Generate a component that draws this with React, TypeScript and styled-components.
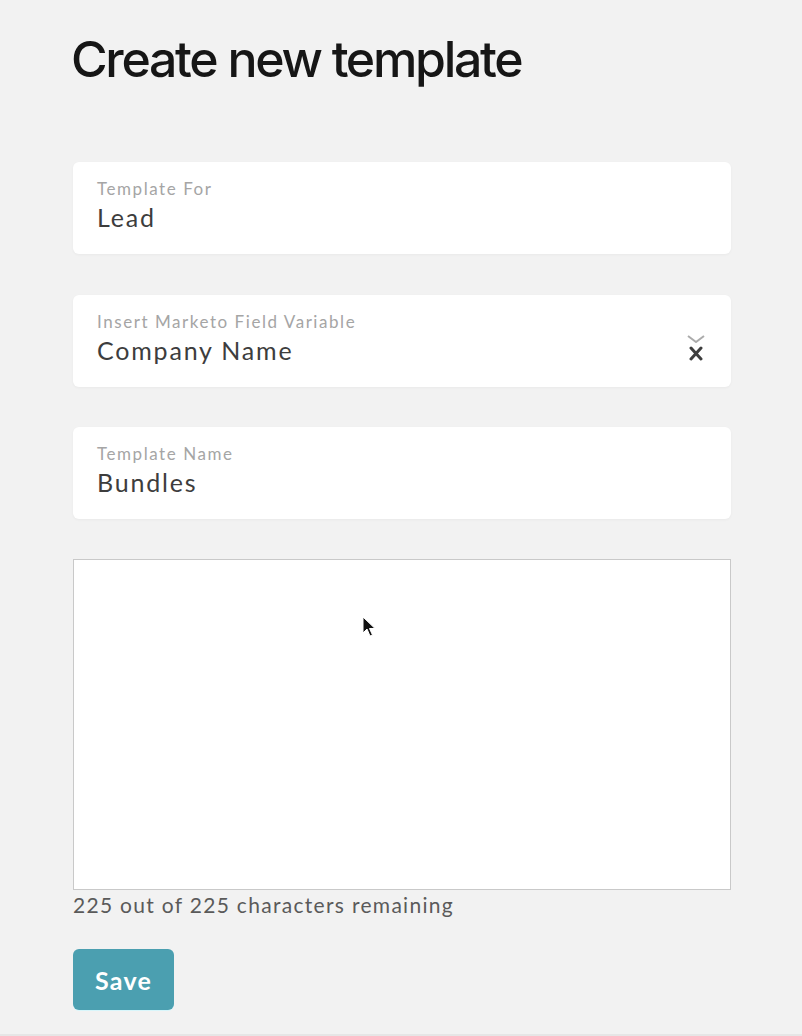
import React, { FC } from "react";
import styled, { createGlobalStyle } from "styled-components";

const GlobalStyle = createGlobalStyle`
  html, body {
    margin: 0;
    padding: 0;
    background: #f2f2f2;
  }
  * { box-sizing: border-box; }
`;

const Page = styled.div`
  width: 802px;
  height: 1036px;
  background: #f2f2f2;
  border-bottom: 2px solid #e6e6e6;
  padding: 0 71px 0 73px;
  font-family: Lato, "Open Sans", "Liberation Sans", sans-serif;
  display: flex;
  flex-direction: column;
`;

const Title = styled.h1`
  margin: 29px 0 0 -2px;
  font-family: Inter, "Liberation Sans", sans-serif;
  font-weight: 500;
  font-size: 50px;
  line-height: 60px;
  letter-spacing: -2.3px;
  color: #161616;
`;

const Fields = styled.div`
  margin-top: 73px;
  display: flex;
  flex-direction: column;
  gap: 40.5px;
`;

const Card = styled.div`
  height: 92px;
  background: #fff;
  border-radius: 6px;
  box-shadow: 0 1px 3px rgba(0, 0, 0, 0.04);
  padding: 16px 24px 0 24px;
  display: flex;
  align-items: center;
`;

const CardBody = styled.div`
  flex: 1;
  display: flex;
  flex-direction: column;
  align-self: flex-start;
`;

const Label = styled.span`
  font-size: 17px;
  line-height: 22px;
  color: #a5a5a5;
  letter-spacing: 1.55px;
`;

const Value = styled.span`
  font-size: 25px;
  line-height: 34px;
  color: #3d3d3d;
  letter-spacing: 1.8px;
`;

const Indicator = styled.div`
  width: 20px;
  display: flex;
  flex-direction: column;
  align-items: center;
  gap: 3px;
  margin: -2px 1px 0 0;
`;

const Editor = styled.div`
  position: relative;
  margin-top: 40px;
  height: 331px;
  background: #fff;
  border: 1px solid #c9c9c9;
`;

const Pointer = styled.svg`
  position: absolute;
  left: 288px;
  top: 56px;
`;

const Counter = styled.div`
  margin-top: 2px;
  font-size: 21px;
  line-height: 26px;
  color: #5a5a5a;
  letter-spacing: 1.3px;
`;

const SaveButton = styled.button`
  margin-top: 31px;
  width: 101px;
  height: 61px;
  border: none;
  border-radius: 6px;
  background: #4b9fb0;
  box-shadow: 0 1px 0 #d8f6fb;
  color: #fff;
  font-family: Lato, "Open Sans", sans-serif;
  font-weight: 700;
  font-size: 25px;
  letter-spacing: 1.2px;
  cursor: pointer;
`;

interface IField {
  label: string;
  value: string;
  clearable?: boolean;
}

const fields: IField[] = [
  { label: "Template For", value: "Lead" },
  { label: "Insert Marketo Field Variable", value: "Company Name", clearable: true },
  { label: "Template Name", value: "Bundles" },
];

const Field: FC<{ props: IField }> = ({ props }) => (
  <Card>
    <CardBody>
      <Label>{props.label}</Label>
      <Value>{props.value}</Value>
    </CardBody>
    {props.clearable && (
      <Indicator>
        <svg width="18" height="8" viewBox="0 0 18 8">
          <path d="M1 1 L9 7 L17 1" fill="none" stroke="#ababab" strokeWidth="2" />
        </svg>
        <svg width="14" height="15" viewBox="0 0 14 15">
          <path d="M2 2 L12 13 M12 2 L2 13" stroke="#3d3d3d" strokeWidth="3" strokeLinecap="round" />
        </svg>
      </Indicator>
    )}
  </Card>
);

const App: FC = () => {
  return (
    <>
      <GlobalStyle />
      <Page>
        <Title>Create new template</Title>
        <Fields>
          {fields.map((f, idx) => (
            <Field key={idx} props={f} />
          ))}
        </Fields>
        <Editor>
          <Pointer width="14" height="22" viewBox="0 0 14 22">
            <path
              d="M1 1 L1 17 L5 13 L8 20 L10.5 19 L7.5 12.5 L13 12.5 Z"
              fill="#111"
              stroke="#fff"
              strokeWidth="1"
            />
          </Pointer>
        </Editor>
        <Counter>225 out of 225 characters remaining</Counter>
        <div>
          <SaveButton>Save</SaveButton>
        </div>
      </Page>
    </>
  );
};

export default App;
